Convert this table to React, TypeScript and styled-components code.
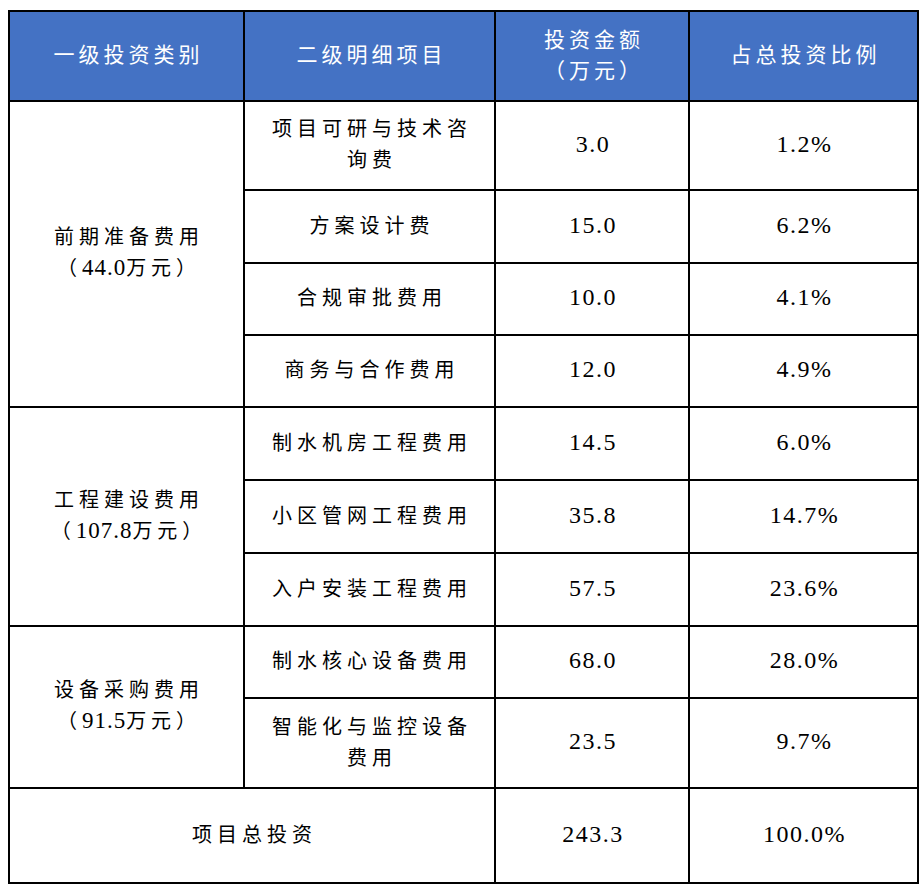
import React from "react";
import styled, { createGlobalStyle } from "styled-components";

const Global = createGlobalStyle`
  html, body { margin: 0; padding: 0; background: #ffffff; }
  body { padding: 10px 0 0 8px; }
`;

const Table = styled.table`
  border-collapse: collapse;
  table-layout: fixed;
  width: 909px;
  font-family: "Noto Sans CJK SC", sans-serif;
  color: #000;
`;

const Row = styled.tr<{ $h: number }>`
  height: ${(p) => p.$h}px;
`;

const HeadCell = styled.th`
  background: #4472c4;
  color: #ffffff;
  border: 2px solid #000;
  font-weight: 400;
  font-size: 21px;
  letter-spacing: 4px;
  line-height: 31px;
  text-align: center;
  vertical-align: middle;
  padding: 0 10px 5px 14px;
`;

const Cell = styled.td<{ $num?: boolean }>`
  border: 2px solid #000;
  text-align: center;
  vertical-align: middle;
  font-family: ${(p) =>
    p.$num
      ? `"Liberation Serif", serif`
      : `"Noto Sans CJK SC", sans-serif`};
  font-size: ${(p) => (p.$num ? 24 : 20)}px;
  letter-spacing: ${(p) => (p.$num ? 1.5 : 5)}px;
  line-height: 31px;
  padding: ${(p) => (p.$num ? "0 2px 3px 4px" : "0 12px 5px 17px")};
`;

const Amount = styled.span`
  font-family: "Liberation Serif", serif;
  font-size: 23px;
  letter-spacing: 1px;
`;

type Item = { name: string; amount: string; pct: string; h: number };
type Group = { title: string; total: string; items: Item[] };

const groups: Group[] = [
  {
    title: "前期准备费用",
    total: "44.0",
    items: [
      { name: "项目可研与技术咨询费", amount: "3.0", pct: "1.2%", h: 89 },
      { name: "方案设计费", amount: "15.0", pct: "6.2%", h: 73 },
      { name: "合规审批费用", amount: "10.0", pct: "4.1%", h: 72 },
      { name: "商务与合作费用", amount: "12.0", pct: "4.9%", h: 72 },
    ],
  },
  {
    title: "工程建设费用",
    total: "107.8",
    items: [
      { name: "制水机房工程费用", amount: "14.5", pct: "6.0%", h: 73 },
      { name: "小区管网工程费用", amount: "35.8", pct: "14.7%", h: 73 },
      { name: "入户安装工程费用", amount: "57.5", pct: "23.6%", h: 73 },
    ],
  },
  {
    title: "设备采购费用",
    total: "91.5",
    items: [
      { name: "制水核心设备费用", amount: "68.0", pct: "28.0%", h: 72 },
      { name: "智能化与监控设备费用", amount: "23.5", pct: "9.7%", h: 90 },
    ],
  },
];

export default function App() {
  return (
    <>
      <Global />
      <Table>
        <colgroup>
          <col style={{ width: 235 }} />
          <col style={{ width: 251 }} />
          <col style={{ width: 194 }} />
          <col style={{ width: 229 }} />
        </colgroup>
        <thead>
          <Row $h={90}>
            <HeadCell>一级投资类别</HeadCell>
            <HeadCell>二级明细项目</HeadCell>
            <HeadCell>
              投资金额
              <br />
              （万元）
            </HeadCell>
            <HeadCell>占总投资比例</HeadCell>
          </Row>
        </thead>
        <tbody>
          {groups.map((g) =>
            g.items.map((it, i) => (
              <Row $h={it.h} key={it.name}>
                {i === 0 && (
                  <Cell rowSpan={g.items.length}>
                    {g.title}
                    <br />
                    （<Amount>{g.total}</Amount>万元）
                  </Cell>
                )}
                <Cell>{it.name}</Cell>
                <Cell $num>{it.amount}</Cell>
                <Cell $num>{it.pct}</Cell>
              </Row>
            ))
          )}
          <Row $h={95}>
            <Cell colSpan={2}>项目总投资</Cell>
            <Cell $num>243.3</Cell>
            <Cell $num>100.0%</Cell>
          </Row>
        </tbody>
      </Table>
    </>
  );
}
